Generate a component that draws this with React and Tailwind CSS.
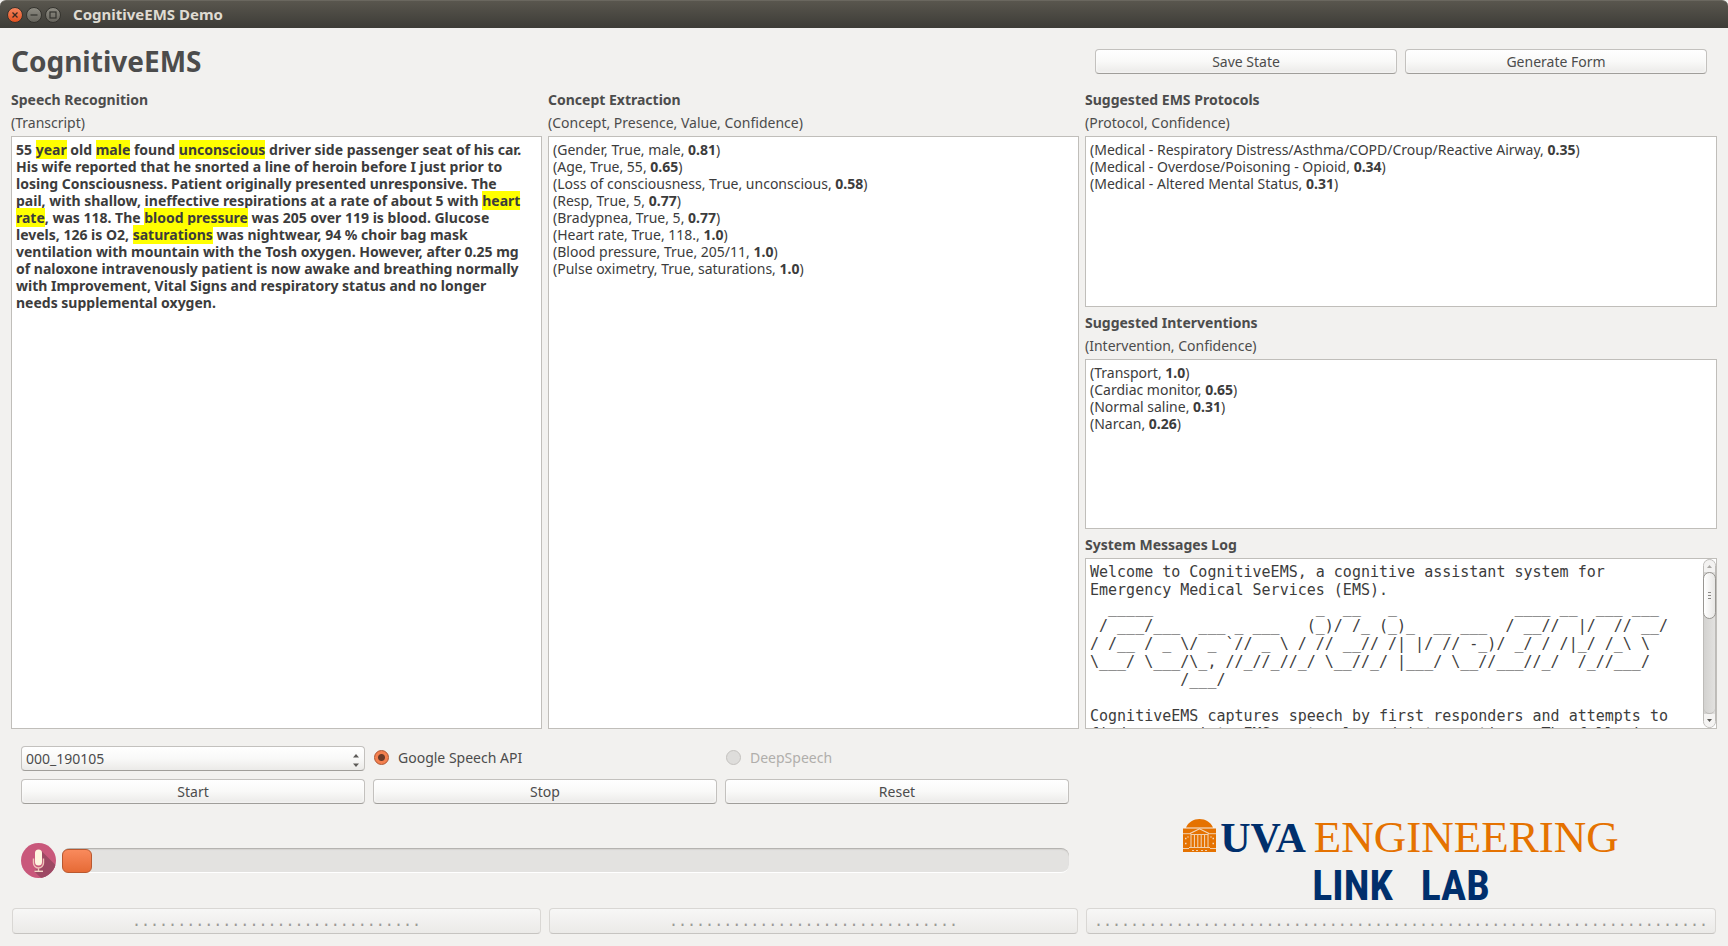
import { useState } from 'react';

const concepts = [
  ['Gender, True, male', '0.81'],
  ['Age, True, 55', '0.65'],
  ['Loss of consciousness, True, unconscious', '0.58'],
  ['Resp, True, 5', '0.77'],
  ['Bradypnea, True, 5', '0.77'],
  ['Heart rate, True, 118.', '1.0'],
  ['Blood pressure, True, 205/11', '1.0'],
  ['Pulse oximetry, True, saturations', '1.0'],
];

const protocols = [
  ['Medical - Respiratory Distress/Asthma/COPD/Croup/Reactive Airway', '0.35'],
  ['Medical - Overdose/Poisoning - Opioid', '0.34'],
  ['Medical - Altered Mental Status', '0.31'],
];

const interventions = [
  ['Transport', '1.0'],
  ['Cardiac monitor', '0.65'],
  ['Normal saline', '0.31'],
  ['Narcan', '0.26'],
];

const logText = [
  'Welcome to CognitiveEMS, a cognitive assistant system for',
  'Emergency Medical Services (EMS).',
  '  _____                  _  __   _             ____ __  ___ ___',
  ' / ___/___  ___ _ ___   (_)/ /_ (_)_  __ ___  / __//  |/  // __/',
  '/ /__ / _ \\/ _ `// _ \\ / // __// /| |/ // -_)/ _/ / /|_/ /_\\ \\',
  '\\___/ \\___/\\_, //_//_//_/ \\__//_/ |___/ \\__//___//_/  /_//___/',
  '          /___/',
  '',
  'CognitiveEMS captures speech by first responders and attempts to',
  'find appropriate EMS protocols and interventions. The following',
].join('\n');

function Mark({ children }) {
  return <mark className="bg-[#ffff00] text-inherit">{children}</mark>;
}

function PushButton({ children }) {
  return (
    <button
      type="button"
      className="h-[25px] w-full rounded border border-[#c3c1be] border-b-[#a09e9a] bg-linear-to-b from-white via-[#f9f9f8] to-[#ebeae8] text-center leading-[23px] shadow-[inset_0_0_3px_#ffffff] active:to-[#d8d6d3]"
    >
      {children}
    </button>
  );
}

function DotButton({ count }) {
  return (
    <button
      type="button"
      disabled
      aria-label="Placeholder"
      className="mx-px h-[26px] min-w-0 overflow-hidden rounded border border-[#d9d7d4] border-b-[#c6c4c1] bg-linear-to-b from-[#f7f7f6] to-[#ebeae8] text-center font-['DejaVu_Sans_Mono',monospace] text-[15px] leading-[24px] text-[#9c9a97]"
    >
      {'.'.repeat(count)}
    </button>
  );
}

function Labels({ title, detail }) {
  return (
    <div className="shrink-0 leading-[23px]">
      <h2 className="font-bold">{title}</h2>
      {detail && <p>{detail}</p>}
    </div>
  );
}

const boxClass =
  'mt-0.5 min-h-0 flex-1 basis-0 overflow-hidden border border-[#c0beba] bg-white text-[#3c3c3c]';

function Results({ items }) {
  return (
    <div className={boxClass}>
      <ul className="p-1 leading-[17px]">
        {items.map(([label, confidence]) => (
          <li key={label}>
            ({label}, <b>{confidence}</b>)
          </li>
        ))}
      </ul>
    </div>
  );
}

function TitleBar() {
  return (
    <div className="flex h-7 shrink-0 items-center rounded-t-md border-t border-[#6a675f] bg-linear-to-b from-[#59564e] to-[#3d3c37] pl-[7px]">
      <div className="flex gap-[3px]">
        <button type="button" aria-label="Close" className="size-4">
          <svg viewBox="0 0 16 16" className="size-4">
            <defs>
              <linearGradient id="close" x1="0" y1="0" x2="0" y2="1">
                <stop offset="0" stopColor="#f68760" />
                <stop offset="1" stopColor="#e2501e" />
              </linearGradient>
            </defs>
            <circle cx="8" cy="8" r="7.5" fill="url(#close)" stroke="#33322d" />
            <path d="M5.5 5.5l5 5M10.500 5.500l-5 5" stroke="#3a2a22" strokeWidth="1.300" />
          </svg>
        </button>
        <button type="button" aria-label="Minimize" className="size-4">
          <svg viewBox="0 0 16 16" className="size-4">
            <defs>
              <linearGradient id="grey" x1="0" y1="0" x2="0" y2="1">
                <stop offset="0" stopColor="#8f8d84" />
                <stop offset="1" stopColor="#65635b" />
              </linearGradient>
            </defs>
            <circle cx="8" cy="8" r="7.5" fill="url(#grey)" stroke="#33322d" />
            <path d="M4.500 8h7" stroke="#33322d" strokeWidth="1.200" />
          </svg>
        </button>
        <button type="button" aria-label="Maximize" className="size-4">
          <svg viewBox="0 0 16 16" className="size-4">
            <circle cx="8" cy="8" r="7.5" fill="url(#grey)" stroke="#33322d" />
            <rect x="5" y="5" width="6" height="6" fill="none" stroke="#33322d" strokeWidth="1.200" />
          </svg>
        </button>
      </div>
      <span className="ml-3 text-[15px] font-bold text-[#dfdbd2]">CognitiveEMS Demo</span>
    </div>
  );
}

function ScrollBar() {
  return (
    <div className="flex w-[13px] shrink-0 flex-col rounded-lg border border-[#bdbbb8] bg-linear-to-r from-[#d3d2d0] to-[#e2e1df]">
      <button type="button" aria-label="Scroll up" className="flex h-3 shrink-0 items-center justify-center rounded-t-lg bg-[#f3f2f1]">
        <svg viewBox="0 0 5 3" className="h-[3px] w-[5px]">
          <path d="M0 3L2.500 0L5 3z" fill="#aaa8a5" />
        </svg>
      </button>
      <div className="-mx-px flex h-[47px] shrink-0 flex-col items-center justify-center gap-0.5 rounded-lg border border-[#989692] bg-linear-to-r from-white to-[#e8e7e5]">
        <i className="h-px w-[3px] bg-[#8c8a87]" />
        <i className="h-px w-[3px] bg-[#8c8a87]" />
        <i className="h-px w-[3px] bg-[#8c8a87]" />
      </div>
      <div className="flex-1 rounded-b-lg border-b border-[#bdbbb8]" />
      <button type="button" aria-label="Scroll down" className="flex h-[13px] shrink-0 items-center justify-center rounded-b-lg bg-[#f5f4f3]">
        <svg viewBox="0 0 5 3" className="h-[3px] w-[5px]">
          <path d="M0 0L2.500 3L5 0z" fill="#5c5a57" />
        </svg>
      </button>
    </div>
  );
}

function MicIcon() {
  return (
    <svg viewBox="0 0 35 35" className="size-[35px] shrink-0" role="img" aria-label="Microphone">
      <defs>
        <clipPath id="disc">
          <circle cx="17.500" cy="17.500" r="17.500" />
        </clipPath>
      </defs>
      <g clipPath="url(#disc)">
        <rect width="35" height="35" fill="#c9587b" />
        <path d="M20.500 8L36 23.500V36H21L13 28L22 22z" fill="#9d4964" />
      </g>
      <rect x="14" y="6.500" width="7" height="16" rx="3.500" fill="#fff5df" />
      <path
        d="M12.500 15.500v4.500a5 5 0 0 0 10 0v-4.500M17.500 25v3"
        fill="none"
        stroke="#f0c3b8"
        strokeWidth="1.400"
      />
      <path d="M13.500 28.300h8.500" stroke="#f6d8c8" strokeWidth="1.400" />
    </svg>
  );
}

function RotundaIcon() {
  return (
    <svg viewBox="0 0 33 33" className="size-[33px]" aria-hidden="true">
      <path d="M3 8.500C5.500 3 10.500 0 16.500 0S27.500 3 30 8.500z" fill="#e57200" />
      <path d="M0 9.500h33V33H0z" fill="#e57200" />
      <g fill="none" stroke="#f2d9bf">
        <path d="M0 14.700h8M25 14.700h8" strokeWidth="0.900" />
        <path d="M7 14.500L16.500 9.800L26 14.500" strokeWidth="1.200" />
        <path d="M7.500 15.500h18" strokeWidth="0.900" />
        <path d="M8 16v12M11.400 16v12M14.800 16v12M18.200 16v12M21.600 16v12M25 16v12" strokeWidth="1" />
        <path d="M6 28.500h21M0 29.500h6M27 29.500h6" strokeWidth="0.900" />
        <path d="M2 19.500h1.500M4.500 18h1M2 24.500h1.500M29.500 19.500h1.500M27.500 18h1M29.500 24.500h1.500" strokeWidth="1.300" />
        <path d="M9 31.500h2M13 31.500h2M18 31.500h2M22 31.500h2" strokeWidth="0.900" />
      </g>
    </svg>
  );
}

function Logo() {
  return (
    <div className="flex flex-col items-center">
      <div className="flex items-end gap-1">
        <RotundaIcon />
        <div className="flex h-[33px] items-baseline gap-2 font-['Liberation_Serif',serif] leading-[36px]">
          <span className="text-[42px] font-bold text-[#002f6c]">UVA</span>
          <span className="text-[45px] text-[#e57200]">ENGINEERING</span>
        </div>
      </div>
      <div className="mt-3 flex h-10 gap-7 font-['Roboto_Condensed','Roboto',sans-serif] text-[42px] leading-[44px] font-bold text-[#002f6c]">
        <span>LINK</span>
        <span>LAB</span>
      </div>
    </div>
  );
}

function Radio({ label, value, engine, onChange, disabled }) {
  return (
    <label className={`flex h-[23px] items-center gap-2 pl-px ${disabled ? 'text-[#b0aeab]' : ''}`}>
      <input
        type="radio"
        name="engine"
        value={value}
        checked={engine === value}
        disabled={disabled}
        onChange={() => onChange(value)}
        className="size-[15px] appearance-none rounded-full border border-[#c4c2bf] bg-[#dedddb] checked:border-[#b0542f] checked:bg-[radial-gradient(circle,#6b3a28_0_3px,#f4804f_4px)]"
      />
      <span className="pl-px">{label}</span>
    </label>
  );
}

export default function App() {
  const [engine, setEngine] = useState('google');

  return (
    <div className="flex min-h-screen flex-col bg-[#f2f1ef] font-['Noto_Sans',sans-serif] text-[14px] text-[#4c4c4c]">
      <TitleBar />

      <main className="flex flex-1 flex-col px-[11px] pb-3">
        <header className="grid h-15 grid-cols-[531fr_531fr_632fr] items-center gap-x-1.5 pt-1.5">
          <h1 className="col-span-2 text-[28px] leading-9 font-bold">CognitiveEMS</h1>
          <div className="grid grid-cols-2 gap-2 px-2.5">
            <PushButton>Save State</PushButton>
            <PushButton>Generate Form</PushButton>
          </div>
        </header>

        <div className="grid min-h-[480px] flex-1 grid-cols-[531fr_531fr_632fr] gap-x-1.5">
          <section className="flex min-w-0 flex-col">
            <Labels title="Speech Recognition" detail="(Transcript)" />
            <div className={boxClass}>
              <p className="p-1 leading-[17px] font-bold">
                55 <Mark>year</Mark> old <Mark>male</Mark> found <Mark>unconscious</Mark> driver side passenger seat of his car.
                <br />
                His wife reported that he snorted a line of heroin before I just prior to
                <br />
                losing Consciousness. Patient originally presented unresponsive. The
                <br />
                pail, with shallow, ineffective respirations at a rate of about 5 with <Mark>heart</Mark>
                <br />
                <Mark>rate</Mark>, was 118. The <Mark>blood pressure</Mark> was 205 over 119 is blood. Glucose
                <br />
                levels, 126 is O2, <Mark>saturations</Mark> was nightwear, 94 % choir bag mask
                <br />
                ventilation with mountain with the Tosh oxygen. However, after 0.25 mg
                <br />
                of naloxone intravenously patient is now awake and breathing normally
                <br />
                with Improvement, Vital Signs and respiratory status and no longer
                <br />
                needs supplemental oxygen.
              </p>
            </div>
          </section>

          <section className="flex min-w-0 flex-col">
            <Labels title="Concept Extraction" detail="(Concept, Presence, Value, Confidence)" />
            <Results items={concepts} />
          </section>

          <div className="flex min-w-0 flex-col">
            <Labels title="Suggested EMS Protocols" detail="(Protocol, Confidence)" />
            <Results items={protocols} />
            <div className="h-1 shrink-0" />
            <Labels title="Suggested Interventions" detail="(Intervention, Confidence)" />
            <Results items={interventions} />
            <div className="h-1 shrink-0" />
            <Labels title="System Messages Log" />
            <div className={`${boxClass} flex`}>
              <pre className="h-0 min-w-0 flex-1 p-1 font-['DejaVu_Sans_Mono',monospace] text-[15px] leading-[18px]">
                {logText}
              </pre>
              <ScrollBar />
            </div>
          </div>
        </div>

        <div className="grid grid-cols-[531fr_531fr_632fr] gap-x-1.5">
          <div className="col-span-2 px-2.5 pt-[17px]">
            <div className="grid grid-cols-3 gap-2">
              <div className="relative">
                <select
                  aria-label="Recording"
                  className="block h-[25px] w-full appearance-none rounded border border-[#c3c1be] border-b-[#a09e9a] bg-linear-to-b from-white via-[#f9f9f8] to-[#ebeae8] px-1"
                >
                  <option>000_190105</option>
                </select>
                <svg viewBox="0 0 6 13" className="pointer-events-none absolute top-[8px] right-[6px] h-[13px] w-[6px]">
                  <path d="M0 3.500L3 0L6 3.500zM0 9.500L3 13L6 9.500z" fill="#5c5a57" />
                </svg>
              </div>
              <Radio label="Google Speech API" value="google" engine={engine} onChange={setEngine} />
              <Radio label="DeepSpeech" value="deepspeech" engine={engine} onChange={setEngine} disabled />
              <PushButton>Start</PushButton>
              <PushButton>Stop</PushButton>
              <PushButton>Reset</PushButton>
            </div>
            <div className="mt-[39px] mb-[30px] flex items-center gap-1.5">
              <MicIcon />
              <div
                role="progressbar"
                aria-label="Microphone level"
                aria-valuenow={3}
                className="h-[25px] flex-1 rounded-lg border-t border-b border-t-[#b5b3b0] border-b-white bg-[#e3e2e0] shadow-[inset_0_1px_1px_#d4d3d0]"
              >
                <div className="h-6 w-[3%] rounded-md border border-[#b9582f] bg-linear-to-b from-[#f98a5c] to-[#e66a35]" />
              </div>
            </div>
          </div>
          <div className="flex flex-col items-center justify-end pb-1">
            <Logo />
          </div>
        </div>

        <div className="grid grid-cols-[531fr_531fr_632fr] gap-x-1.5">
          <DotButton count={32} />
          <DotButton count={32} />
          <DotButton count={68} />
        </div>
      </main>
    </div>
  );
}
